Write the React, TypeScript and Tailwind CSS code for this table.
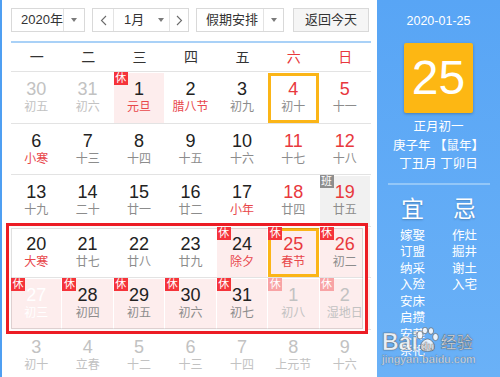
import React from 'react';

type Tone = 'n' | 'r' | 'g' | 'w';
type C = { d: string; l: string; n?: Tone; lt?: Tone; bg?: 'p' | 'gr'; b?: 'x' | 'xf' | 'ban'; sel?: boolean };

const numCls: Record<Tone, string> = {
  n: 'text-[#222222]',
  r: 'text-[#e8383d]',
  g: 'text-[#c2c2c2]',
  w: 'text-white',
};
const lunCls: Record<Tone, string> = {
  n: 'text-[#8c8c8c]',
  r: 'text-[#e8474b]',
  g: 'text-[#c2c2c2]',
  w: 'text-white',
};

const rows: C[][] = [
  [
    { d: '30', l: '初五', n: 'g', lt: 'g' },
    { d: '31', l: '初六', n: 'g', lt: 'g' },
    { d: '1', l: '元旦', lt: 'r', bg: 'p', b: 'x' },
    { d: '2', l: '腊八节', lt: 'r' },
    { d: '3', l: '初九' },
    { d: '4', l: '初十', n: 'r', sel: true },
    { d: '5', l: '十一', n: 'r' },
  ],
  [
    { d: '6', l: '小寒', lt: 'r' },
    { d: '7', l: '十三' },
    { d: '8', l: '十四' },
    { d: '9', l: '十五' },
    { d: '10', l: '十六' },
    { d: '11', l: '十七', n: 'r' },
    { d: '12', l: '十八', n: 'r' },
  ],
  [
    { d: '13', l: '十九' },
    { d: '14', l: '二十' },
    { d: '15', l: '廿一' },
    { d: '16', l: '廿二' },
    { d: '17', l: '小年', lt: 'r' },
    { d: '18', l: '廿四', n: 'r' },
    { d: '19', l: '廿五', n: 'r', bg: 'gr', b: 'ban' },
  ],
  [
    { d: '20', l: '大寒', lt: 'r' },
    { d: '21', l: '廿七' },
    { d: '22', l: '廿八' },
    { d: '23', l: '廿九' },
    { d: '24', l: '除夕', lt: 'r', bg: 'p', b: 'x' },
    { d: '25', l: '春节', n: 'r', lt: 'r', bg: 'p', b: 'x', sel: true },
    { d: '26', l: '初二', n: 'r', bg: 'p', b: 'x' },
  ],
  [
    { d: '27', l: '初三', n: 'w', lt: 'w', bg: 'p', b: 'x' },
    { d: '28', l: '初四', bg: 'p', b: 'x' },
    { d: '29', l: '初五', bg: 'p', b: 'x' },
    { d: '30', l: '初六', bg: 'p', b: 'x' },
    { d: '31', l: '初七', bg: 'p', b: 'x' },
    { d: '1', l: '初八', n: 'g', lt: 'g', bg: 'p', b: 'xf' },
    { d: '2', l: '湿地日', n: 'g', lt: 'g', bg: 'p', b: 'xf' },
  ],
  [
    { d: '3', l: '初十', n: 'g', lt: 'g' },
    { d: '4', l: '立春', n: 'g', lt: 'g' },
    { d: '5', l: '十二', n: 'g', lt: 'g' },
    { d: '6', l: '十三', n: 'g', lt: 'g' },
    { d: '7', l: '十四', n: 'g', lt: 'g' },
    { d: '8', l: '上元节', n: 'g', lt: 'g' },
    { d: '9', l: '十六', n: 'g', lt: 'g' },
  ],
];

function Badge({ kind }: { kind: 'x' | 'xf' | 'ban' }) {
  const cls =
    kind === 'x' ? 'bg-[#f5333a]' : kind === 'xf' ? 'bg-[#f8a3a5]' : 'bg-[#8e8e8e]';
  return (
    <span
      className={`absolute left-0 top-0 z-10 flex h-[13px] w-[14px] items-center justify-center text-[11px] leading-[13px] text-white ${cls}`}
    >
      {kind === 'ban' ? '班' : '休'}
    </span>
  );
}

function DayCell({ c }: { c: C }) {
  const bg = c.bg === 'p' ? 'bg-[#fdeded]' : c.bg === 'gr' ? 'bg-[#f1f1f1]' : '';
  const sel = c.sel ? 'shadow-[inset_0_0_0_3px_#fbb517]' : '';
  return (
    <div className="relative h-full pr-px pt-px">
      {c.b && <Badge kind={c.b} />}
      <div className={`flex h-full flex-col items-center pt-[6px] ${bg} ${sel}`}>
        <span className={`text-[18px] leading-[20px] ${numCls[c.n ?? 'n']}`}>{c.d}</span>
        <span className={`mt-px text-[12px] leading-[14px] ${lunCls[c.lt ?? 'n']}`}>{c.l}</span>
      </div>
    </div>
  );
}

function Caret() {
  return (
    <span className="h-0 w-0 border-l-[3.5px] border-r-[3.5px] border-t-[4px] border-l-transparent border-r-transparent border-t-[#7a7a7a]" />
  );
}

function Chevron({ dir }: { dir: 'l' | 'r' }) {
  return (
    <svg width="7" height="11" viewBox="0 0 7 11" fill="none">
      <polyline
        points={dir === 'l' ? '6,1 1.5,5.5 6,10' : '1,1 5.5,5.5 1,10'}
        stroke="#6b6b6b"
        strokeWidth="1.1"
      />
    </svg>
  );
}

function Paw() {
  return (
    <svg width="24" height="26" viewBox="0 0 24 26">
      <g fill="rgba(255,255,255,0.85)" stroke="rgba(80,80,80,0.65)" strokeWidth="0.9">
        <ellipse cx="5" cy="8" rx="3" ry="4" />
        <ellipse cx="10" cy="3.5" rx="2.6" ry="3.3" />
        <ellipse cx="16" cy="4" rx="2.6" ry="3.3" />
        <ellipse cx="20.5" cy="10" rx="2.8" ry="3.6" />
        <path d="M6 22 C4 17 9 12 12.5 12 C16 12 21 17 19 22 C18 25 7 25 6 22 Z" />
      </g>
    </svg>
  );
}

export default function App() {
  const week = ['一', '二', '三', '四', '五', '六', '日'];
  const yi = ['嫁娶', '订盟', '纳采', '入殓', '安床', '启攒', '安葬', '祭祀'];
  const ji = ['作灶', '掘井', '谢土', '入宅'];
  return (
    <div className="flex h-[377px] w-[500px] overflow-hidden bg-white font-['Liberation_Sans','Noto_Sans_CJK_SC',sans-serif]">
      {/* left strip */}
      <div className="w-[2px] shrink-0 bg-[#4f9ff2]" />
      {/* calendar */}
      <div className="relative w-[375px] shrink-0 pl-[9px] pr-[6px] pt-[8px]">
        {/* controls */}
        <div className="flex h-[24px] whitespace-nowrap text-[13px] text-[#333333]">
          <div className="flex w-[74px] border border-[#d9d9d9] bg-white">
            <div className="flex w-[51px] items-center pl-[9px]">2020年</div>
            <div className="w-px bg-[#e3e3e3]" />
            <div className="flex flex-1 items-center justify-center">
              <Caret />
            </div>
          </div>
          <div className="ml-[7px] flex w-[97px] border border-[#d9d9d9] bg-white">
            <div className="flex w-[20px] items-center justify-center">
              <Chevron dir="l" />
            </div>
            <div className="w-px bg-[#e3e3e3]" />
            <div className="flex w-[55px] items-center">
              <span className="ml-[10px]">1月</span>
              <span className="ml-[14px] flex">
                <Caret />
              </span>
            </div>
            <div className="w-px bg-[#e3e3e3]" />
            <div className="flex flex-1 items-center justify-center">
              <Chevron dir="r" />
            </div>
          </div>
          <div className="ml-[7px] flex w-[88px] border border-[#d9d9d9] bg-white">
            <div className="flex w-[66px] items-center pl-[9px]">假期安排</div>
            <div className="w-px bg-[#e3e3e3]" />
            <div className="flex flex-1 items-center justify-center">
              <Caret />
            </div>
          </div>
          <div className="ml-[9px] flex w-[76px] items-center justify-center border border-[#d9d9d9] bg-[#f5f5f5]">
            返回今天
          </div>
        </div>
        {/* blue line */}
        <div className="mt-[9px] h-[2px] bg-[#a9d1f7]" />
        {/* weekday header */}
        <div className="grid h-[29px] grid-cols-7 items-center border-b border-[#e3e3e3] text-[14px]">
          {week.map((w, i) => (
            <div key={w} className={`text-center ${i >= 5 ? 'text-[#e8383d]' : 'text-[#333333]'}`}>
              {w}
            </div>
          ))}
        </div>
        {/* days */}
        {rows.map((r, ri) => (
          <div key={ri} className="grid h-[51.5px] grid-cols-7 border-b border-[#e3e3e3]">
            {r.map((c, ci) => (
              <DayCell key={ci} c={c} />
            ))}
          </div>
        ))}
        {/* red annotation box */}
        <div className="pointer-events-none absolute left-[4px] top-[223px] h-[111px] w-[362px] border-[3px] border-[#ec1c24] shadow-[inset_0_0_0_2px_rgba(255,255,255,0.9),inset_0_0_0_3px_rgba(0,0,0,0.12)]" />
      </div>
      {/* right panel */}
      <div className="relative flex flex-1 flex-col items-center bg-gradient-to-b from-[#58a5f5] to-[#6ab1f7] text-white">
        <div className="mt-[13px] text-[12.5px] leading-[16px]">2020-01-25</div>
        <div className="mt-[14px] flex h-[70px] w-[69px] items-center justify-center rounded-[2px] bg-[#fdb713] text-[48px] leading-none shadow-[0_1px_3px_rgba(0,0,0,0.25)]">
          25
        </div>
        <div className="mt-[5px] text-center text-[12.5px] leading-[18.5px]">
          <div>正月初一</div>
          <div>庚子年 【鼠年】</div>
          <div>丁丑月 丁卯日</div>
        </div>
        <div className="mt-[9px] h-[2px] w-[102px] bg-[#93c7f8]" />
        <div className="mt-[11px] flex justify-center gap-[12px]">
          <div className="flex w-[40px] flex-col items-center">
            <div className="text-[23px] leading-[26px] [text-shadow:0_1px_2px_rgba(0,0,0,0.25)]">宜</div>
            <div className="mt-[6px] flex flex-col items-center text-[12.5px] leading-[16.5px]">
              {yi.map((t) => (
                <div key={t}>{t}</div>
              ))}
            </div>
          </div>
          <div className="flex w-[40px] flex-col items-center">
            <div className="text-[23px] leading-[26px] [text-shadow:0_1px_2px_rgba(0,0,0,0.25)]">忌</div>
            <div className="mt-[6px] flex flex-col items-center text-[12.5px] leading-[16.5px]">
              {ji.map((t) => (
                <div key={t}>{t}</div>
              ))}
            </div>
          </div>
        </div>
        {/* watermark */}
        <div className="pointer-events-none absolute left-[5px] top-[327px] flex flex-col text-[rgba(255,255,255,0.88)] [-webkit-text-stroke:0.6px_rgba(70,70,70,0.55)] [text-shadow:0_0_2px_rgba(40,40,40,0.35)]">
          <div className="flex items-end">
            <span className="text-[23px] font-bold leading-[24px]">Bai</span>
            <span className="relative -ml-[3px] mb-[1px] flex">
              <Paw />
              <span className="absolute bottom-[1px] left-[6px] text-[11px] font-bold leading-[12px]">du</span>
            </span>
            <span className="ml-[2px] text-[16px] leading-[22px]">经验</span>
          </div>
          <div className="-mt-[1px] text-[11px] leading-[13px] tracking-[0.3px] [-webkit-text-stroke:0.3px_rgba(70,70,70,0.5)]">
            jingyan.baidu.com
          </div>
        </div>
      </div>
    </div>
  );
}
